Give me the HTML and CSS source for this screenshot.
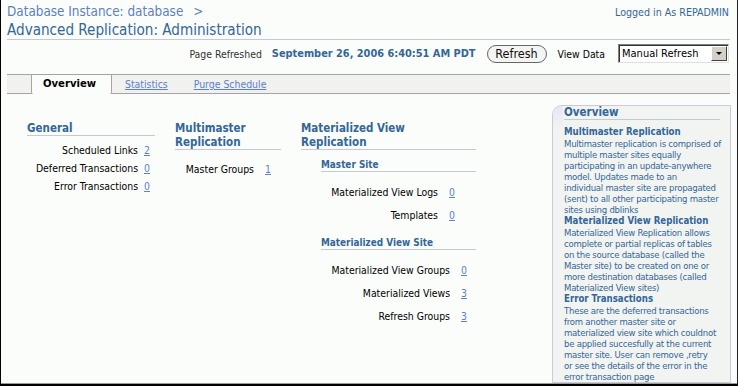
FILE: index.html
```html
<!DOCTYPE html>
<html lang="en">
<head>
    <meta charset="UTF-8">
    <meta name="viewport" content="width=device-width, initial-scale=1.0">
    <title>Advanced Replication: Administration</title>
    <link rel="stylesheet" href="styles.css">
</head>
<body>
<div class="window">
  <div class="page">
    <div class="header">
        <div class="header-left">
            <div class="crumb"><a href="#">Database Instance: database</a><span class="crumb-sep">&gt;</span></div>
            <h1 class="page-title">Advanced Replication: Administration</h1>
        </div>
        <div class="login">Logged in As REPADMIN</div>
    </div>

    <div class="refresh-bar">
        <span class="refresh-label">Page Refreshed</span>
        <span class="refresh-date">September 26, 2006 6:40:51 AM PDT</span>
        <button class="btn">Refresh</button>
        <span class="view-label">View Data</span>
        <div class="select">
            <span class="select-text">Manual Refresh</span>
            <span class="select-arrow"></span>
        </div>
    </div>

    <div class="tabs">
        <span class="tab tab-active">Overview</span>
        <a class="tab" href="#">Statistics</a>
        <a class="tab" href="#">Purge Schedule</a>
    </div>

    <div class="content">
        <div class="sections">
            <div class="section">
                <h2 class="section-title">General</h2>
                <div class="rows rows-general">
                    <span class="label">Scheduled Links</span><a href="#">2</a>
                    <span class="label">Deferred Transactions</span><a href="#">0</a>
                    <span class="label">Error Transactions</span><a href="#">0</a>
                </div>
            </div>

            <div class="section">
                <h2 class="section-title">Multimaster<br>Replication</h2>
                <div class="rows rows-master">
                    <span class="label">Master Groups</span><a href="#">1</a>
                </div>
            </div>

            <div class="section">
                <h2 class="section-title">Materialized View<br>Replication</h2>
                <h3 class="sub-title sub-first">Master Site</h3>
                <div class="rows rows-site">
                    <span class="label">Materialized View Logs</span><a href="#">0</a>
                    <span class="label">Templates</span><a href="#">0</a>
                </div>
                <h3 class="sub-title">Materialized View Site</h3>
                <div class="rows rows-mview">
                    <span class="label">Materialized View Groups</span><a href="#">0</a>
                    <span class="label">Materialized Views</span><a href="#">3</a>
                    <span class="label">Refresh Groups</span><a href="#">3</a>
                </div>
            </div>
        </div>

        <div class="overview">
            <h2 class="overview-title">Overview</h2>
            <h4 class="help-title help-first">Multimaster Replication</h4>
            <p class="help-text">Multimaster replication is comprised of<br>multiple master sites equally<br>participating in an update-anywhere<br>model. Updates made to an<br>individual master site are propagated<br>(sent) to all other participating master<br>sites using dblinks</p>
            <h4 class="help-title">Materialized View Replication</h4>
            <p class="help-text">Materialized View Replication allows<br>complete or partial replicas of tables<br>on the source database (called the<br>Master site) to be created on one or<br>more destination databases (called<br>Materialized View sites)</p>
            <h4 class="help-title">Error Transactions</h4>
            <p class="help-text">These are the deferred transactions<br>from another master site or<br>materialized view site which couldnot<br>be applied succesfully at the current<br>master site. User can remove ,retry<br>or see the details of the error in the<br>error transaction page</p>
        </div>
    </div>
  </div>
</div>
</body>
</html>
```

FILE: styles.css
```css
body {
    margin: 0;
    font-family: "DejaVu Sans Condensed", "DejaVu Sans", sans-serif;
    font-stretch: condensed;
    font-size: 10.4px;
    color: #000;
    background: #fbfdfb;
}
a {
    color: #5b7fcf;
}
.window {
    height: 386px;
    box-sizing: border-box;
    border-left: 1px solid #000;
    border-right: 1px solid #222;
    border-bottom: 2px solid #000;
}
.page {
    height: 384px;
    box-sizing: border-box;
    border-bottom: 1px solid #9a9a9a;
    overflow: hidden;
}

/* header */
.header {
    display: flex;
    justify-content: space-between;
    margin: 0 7px 0 6px;
    padding-top: 4px;
    border-bottom: 1px solid #c5c8d6;
}
.crumb {
    font-size: 13.4px;
    line-height: 16px;
    color: #5b7fbf;
}
.crumb a {
    text-decoration: none;
    color: #5b7fbf;
}
.crumb-sep {
    margin-left: 10px;
}
.page-title {
    margin: 1px 0 0;
    font-size: 15.1px;
    font-weight: normal;
    line-height: 18px;
    color: #336699;
}
.login {
    font-size: 10.6px;
    line-height: 16px;
    color: #336699;
    margin-right: 1px;
}

/* refresh row */
.refresh-bar {
    display: flex;
    justify-content: flex-end;
    align-items: center;
    height: 19px;
    margin: 4px 8px 0 0;
}
.refresh-label {
    color: #333;
}
.refresh-date {
    margin-left: 10px;
    font-weight: bold;
    font-size: 10.9px;
    color: #336699;
}
.btn {
    margin-left: 11px;
    width: 60px;
    height: 18px;
    padding: 0;
    font-family: inherit;
    font-size: 12.5px;
    line-height: 15px;
    color: #111;
    background: #f4f4f2;
    border: 1px solid #666;
    border-radius: 9px;
}
.view-label {
    margin-left: 11px;
}
.select {
    display: flex;
    align-items: center;
    justify-content: space-between;
    margin-left: 13px;
    width: 111px;
    height: 19px;
    box-sizing: border-box;
    border: 1px solid #808080;
    border-right-color: #e0e0e0;
    border-bottom-color: #e0e0e0;
    box-shadow: inset 1px 1px 0 #333;
    background: #fff;
    font-size: 11px;
}
.select-text {
    padding-left: 3px;
}
.select-arrow {
    position: relative;
    width: 16px;
    height: 15px;
    margin-right: 1px;
    box-sizing: border-box;
    background: #d4d0c8;
    border: 1px solid #fff;
    border-right-color: #404040;
    border-bottom-color: #404040;
}
.select-arrow::after {
    content: "";
    position: absolute;
    left: 4px;
    top: 5px;
    border-left: 3px solid transparent;
    border-right: 3px solid transparent;
    border-top: 3px solid #000;
}

/* tabs */
.tabs {
    display: flex;
    align-items: stretch;
    height: 18px;
    margin: 11px 7px 0 6px;
    padding-left: 24px;
    background: #f1f1ef;
    border-top: 1px solid #a4a4a4;
    border-bottom: 1px solid #a4a4a4;
    line-height: 18px;
}
.tab {
    padding: 0 13px;
}
.tab-active {
    width: 68px;
    padding: 0 0 1px 11px;
    margin-bottom: -1px;
    font-weight: bold;
    font-size: 11.2px;
    background: #fbfdfb;
    border-left: 1px solid #a4a4a4;
    border-right: 1px solid #a4a4a4;
    border-radius: 0 0 2px 2px;
}

/* content */
.content {
    display: flex;
    justify-content: space-between;
    margin: 0 6px 0 6px;
}
.sections {
    display: grid;
    grid-template-columns: 128px 106px 175px;
    column-gap: 20px;
    align-items: start;
    padding: 27px 0 0 20px;
}
.section-title {
    margin: 0;
    font-size: 11.5px;
    line-height: 14px;
    color: #336699;
    border-bottom: 1px solid #c5c8d6;
}
.sub-title {
    margin: 11px 0 0 20px;
    font-size: 9.9px;
    line-height: 12px;
    color: #336699;
    border-bottom: 1px solid #c5c8d6;
}
.sub-first {
    margin-top: 9px;
}
.rows {
    display: grid;
    align-items: center;
    grid-auto-rows: 23px;
    margin-top: 8px;
}
.label {
    text-align: right;
}
.rows-general {
    grid-template-columns: 111px auto;
    column-gap: 6px;
    grid-auto-rows: 18px;
    margin-top: 5px;
}
.rows-master {
    grid-template-columns: 79px auto;
    column-gap: 11px;
    grid-auto-rows: 18px;
    margin-top: 10px;
}
.rows-site {
    grid-template-columns: 117px auto;
    column-gap: 11px;
    margin-left: 20px;
}
.rows-mview {
    grid-template-columns: 129px auto;
    column-gap: 11px;
    margin-left: 20px;
}

/* overview help box */
.overview {
    position: relative;
    width: 156px;
    margin-top: 11px;
    padding: 0 10px 0 11px;
    background: #f2f4f1;
    border: 1px solid #c9cadb;
    border-top-left-radius: 10px;
    color: #336699;
}
.overview::before {
    content: "";
    position: absolute;
    left: 0;
    top: 0;
    width: 10px;
    height: 24px;
    border-top-left-radius: 9px;
    background: linear-gradient(#e6e6f7, #f2f4f1);
}
.overview-title {
    margin: 0;
    font-size: 11.5px;
    line-height: 13px;
    color: #336699;
    border-bottom: 1px solid #c5c8d6;
}
.help-title {
    margin: 0;
    font-size: 9.6px;
    line-height: 12px;
}
.help-first {
    margin-top: 6px;
}
.help-text {
    margin: 0;
    font-size: 9.5px;
    letter-spacing: -0.25px;
    line-height: 11px;
    white-space: nowrap;
}
```
